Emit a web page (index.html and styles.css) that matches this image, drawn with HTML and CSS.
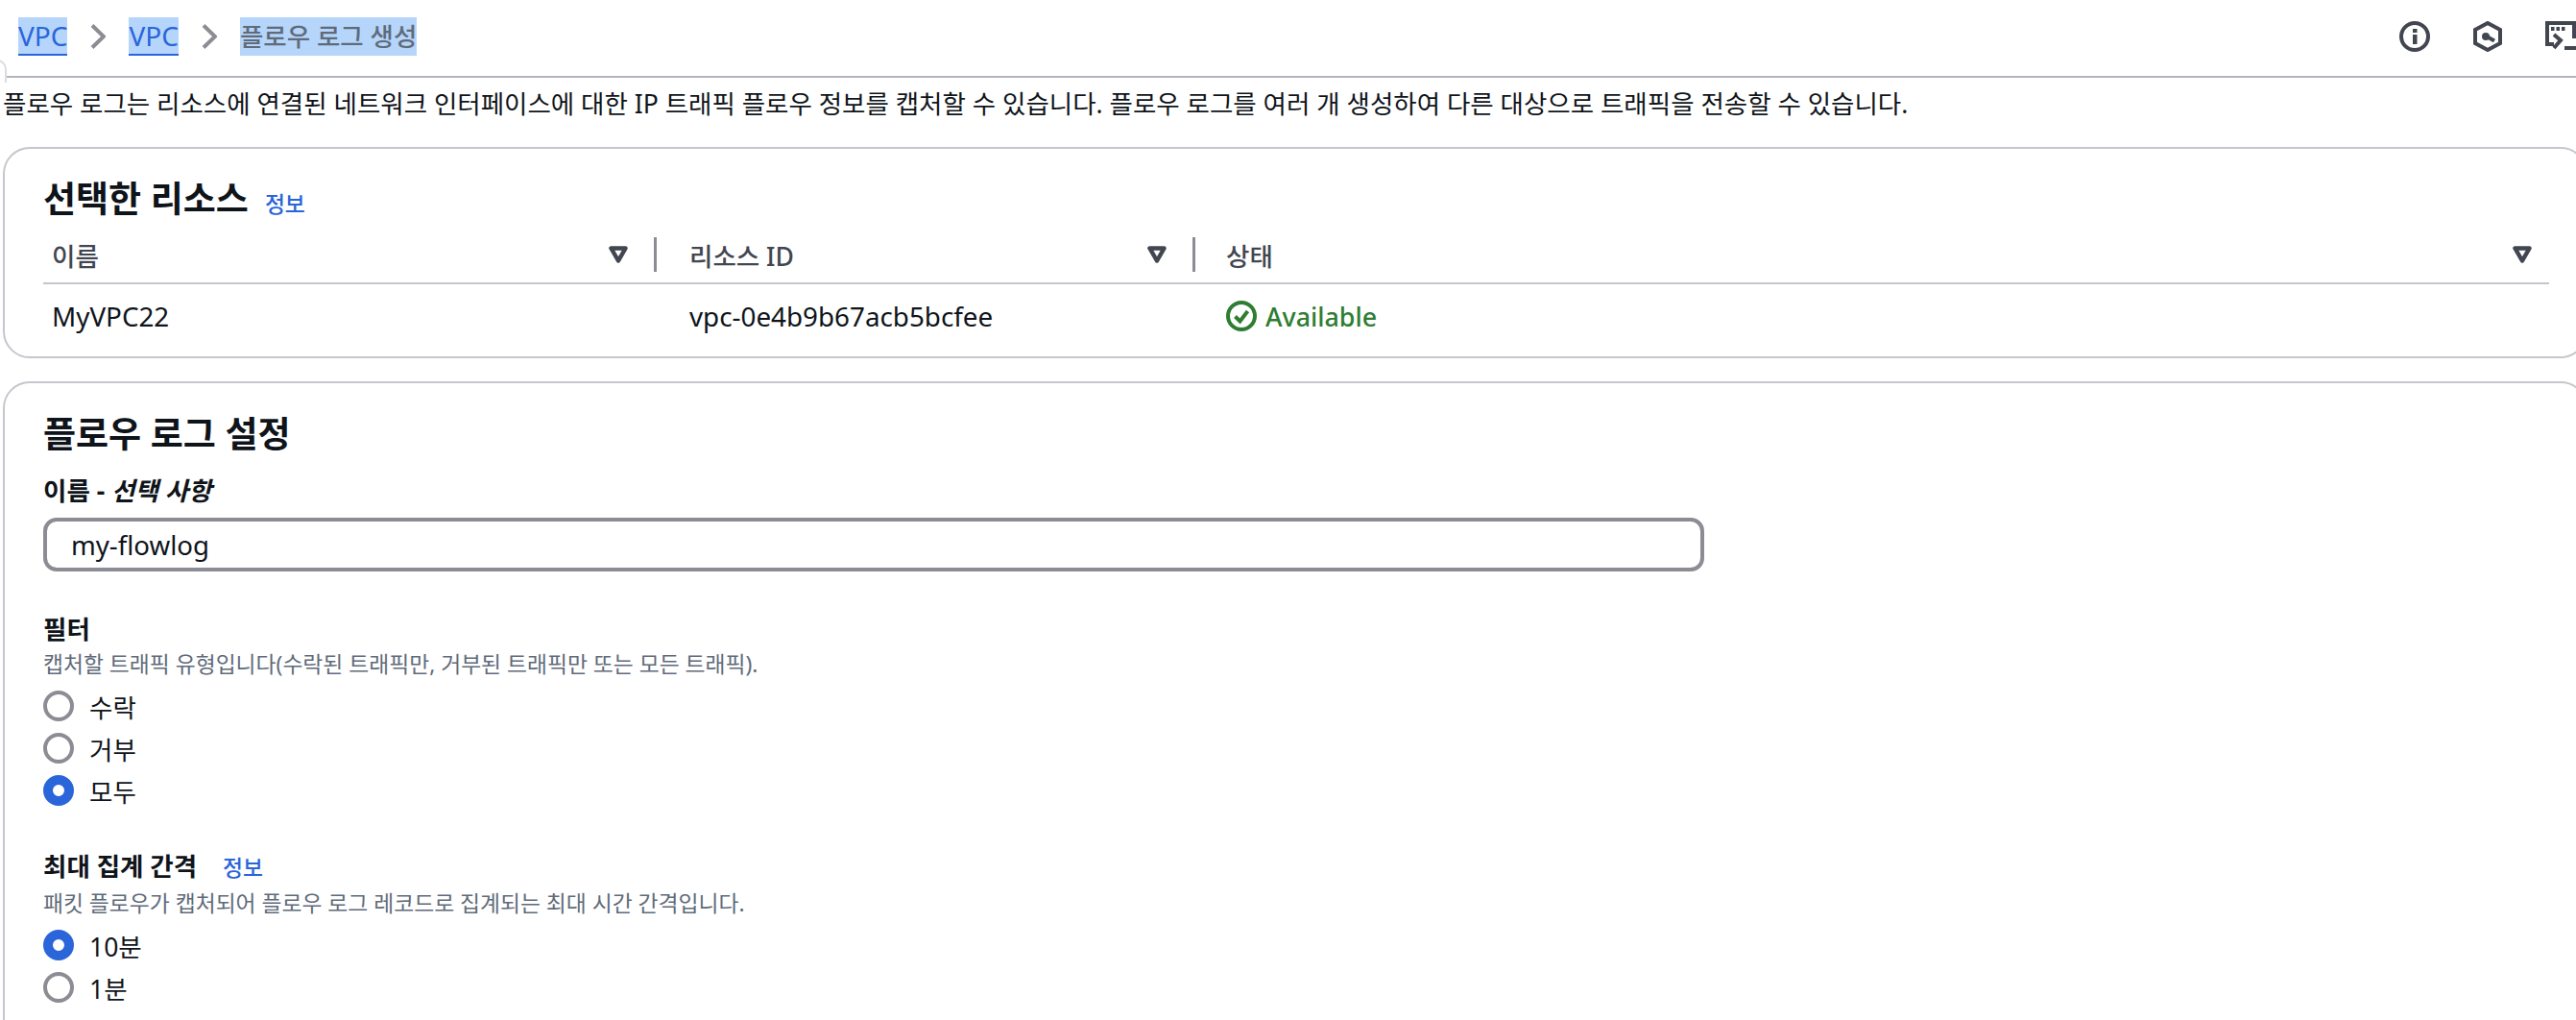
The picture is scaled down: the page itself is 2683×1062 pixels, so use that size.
FILE: index.html
```html
<!DOCTYPE html>
<html lang="ko">

<head>
    <meta charset="UTF-8">
    <title>플로우 로그 생성</title>
    <link rel="stylesheet" href="styles.css">
</head>

<body>
    <!-- Top bar -->
    <header class="topbar">
        <nav class="crumbs">
            <a class="crumb-link" href="#">VPC</a>
            <svg class="chevron" viewBox="0 0 16 26"><path d="M2 1.500 14 13 2 24.500"/></svg>
            <a class="crumb-link" href="#">VPC</a>
            <svg class="chevron" viewBox="0 0 16 26"><path d="M2 1.500 14 13 2 24.500"/></svg>
            <span class="crumb-current">플로우 로그 생성</span>
        </nav>
        <div class="tools">
            <svg class="tool" viewBox="0 0 32 32">
                <circle class="line" cx="16" cy="16" r="14"/>
                <rect class="fill" x="14" y="8" width="4.500" height="4"/>
                <rect class="fill" x="14" y="14" width="4.500" height="10"/>
            </svg>
            <svg class="tool" viewBox="0 0 32 32">
                <path class="line" d="M16 2 29 9V23L16 30 3 23V9Z"/>
                <circle class="fill" cx="14" cy="16" r="4"/>
                <path class="line" d="M15 16 23 20.500"/>
            </svg>
            <svg class="tool" viewBox="0 0 32 32">
                <path class="line" d="M9 24H2V2H30V18"/>
                <rect class="fill" x="6" y="6" width="3.500" height="4"/>
                <rect class="fill" x="11.500" y="6" width="3.500" height="4"/>
                <rect class="fill" x="17" y="6" width="3.500" height="4"/>
                <path class="line" d="M9 14 16 20 9 28"/>
                <rect class="fill" x="20" y="26" width="12" height="4"/>
            </svg>
        </div>
    </header>

    <p class="intro">플로우 로그는 리소스에 연결된 네트워크 인터페이스에 대한 IP 트래픽 플로우 정보를 캡처할 수 있습니다. 플로우 로그를 여러 개 생성하여 다른 대상으로 트래픽을 전송할 수 있습니다.</p>

    <!-- Selected resources -->
    <section class="card card-resources">
        <div class="card-title">
            <h2>선택한 리소스</h2>
            <a class="info" href="#">정보</a>
        </div>
        <div class="table">
            <div class="th col-first">
                <span class="th-name">이름</span>
                <svg class="sort" viewBox="0 0 20 18"><path d="M2.500 2.500H17.500L10 15.500Z"/></svg>
                <span class="sep"></span>
            </div>
            <div class="th">
                <span class="th-name">리소스 ID</span>
                <svg class="sort" viewBox="0 0 20 18"><path d="M2.500 2.500H17.500L10 15.500Z"/></svg>
                <span class="sep"></span>
            </div>
            <div class="th col-last">
                <span class="th-name">상태</span>
                <svg class="sort" viewBox="0 0 20 18"><path d="M2.500 2.500H17.500L10 15.500Z"/></svg>
            </div>
            <div class="td col-first">MyVPC22</div>
            <div class="td">vpc-0e4b9b67acb5bcfee</div>
            <div class="td col-last status">
                <svg class="status-icon" viewBox="0 0 32 32">
                    <circle cx="16" cy="16" r="14"/>
                    <path d="M9.500 16.500 14.500 21.500 22.500 11"/>
                </svg>
                Available
            </div>
        </div>
    </section>

    <!-- Flow log settings -->
    <section class="card card-settings">
        <h2 class="settings-title">플로우 로그 설정</h2>

        <label class="field-label" for="flow-name">이름 - <i>선택 사항</i></label>
        <input class="text-input" id="flow-name" type="text" value="my-flowlog">

        <div class="field field-filter">
            <div class="field-label">필터</div>
            <div class="hint">캡처할 트래픽 유형입니다(수락된 트래픽만, 거부된 트래픽만 또는 모든 트래픽).</div>
            <label class="radio"><input type="radio" name="filter">수락</label>
            <label class="radio"><input type="radio" name="filter">거부</label>
            <label class="radio"><input type="radio" name="filter" checked>모두</label>
        </div>

        <div class="field field-interval">
            <div class="field-label">최대 집계 간격 <a class="info info-label" href="#">정보</a></div>
            <div class="hint">패킷 플로우가 캡처되어 플로우 로그 레코드로 집계되는 최대 시간 간격입니다.</div>
            <label class="radio"><input type="radio" name="interval" checked>10분</label>
            <label class="radio"><input type="radio" name="interval">1분</label>
        </div>
    </section>
</body>
</html>
```

FILE: styles.css
```css
html, body {
    margin: 0;
    height: 1062px;
    overflow: hidden;
    background-color: #ffffff;
}

body {
    font-family: "Noto Sans", "Noto Sans CJK KR", sans-serif;
    font-size: 26.5px;
    color: #0f141a;
}

a {
    color: #2a65d9;
}

/* top bar */
.topbar {
    box-sizing: border-box;
    height: 81px;
    margin-left: 5px;
    padding: 18px 0 0 14px;
    border-bottom: 2px solid #b4b4bb;
    display: flex;
    justify-content: space-between;
}

/* corner of the container behind the bar */
.topbar::before {
    content: "";
    position: absolute;
    left: -20px;
    top: 62px;
    width: 23px;
    height: 22px;
    border: 2px solid #dcdce0;
    border-bottom: none;
    border-radius: 10px 10px 0 0;
}

.crumbs {
    display: flex;
    align-items: flex-start;
    height: 40px;
    line-height: 40px;
}

.crumb-link {
    height: 38px;
    font-size: 28px;
    line-height: 38px;
    background-color: #b5d5fb;
    border-bottom: 2px solid #2a65d9;
    text-decoration: none;
}

.crumb-current {
    background-color: #b5d5fb;
    color: #5f6b7a;
    font-weight: 500;
    height: 40px;
}

.chevron {
    width: 16px;
    height: 26px;
    margin: 7px 24px 0;
    fill: none;
    stroke: #8c8c94;
    stroke-width: 4;
}

.tools {
    display: flex;
    gap: 44px;
    padding-top: 4px;
}

.tool {
    width: 32px;
    height: 32px;
}

.tool .line {
    fill: none;
    stroke: #424650;
    stroke-width: 4;
}

.tool .fill {
    fill: #424650;
}

.intro {
    margin: 0;
    padding-left: 3px;
    height: 72px;
    line-height: 54px;
    white-space: nowrap;
}

/* cards */
.card {
    box-sizing: border-box;
    width: 2692px;
    margin-left: 3px;
    border: 2px solid #c6c6cd;
    border-radius: 28px;
    padding: 0 0 0 40px;
}

.card-resources {
    height: 220px;
    margin-bottom: 24px;
}

.card-settings {
    height: 700px;
}

.card-title {
    display: flex;
    align-items: baseline;
    gap: 17px;
    height: 81px;
    padding-top: 29px;
    box-sizing: border-box;
}

h2 {
    margin: 0;
    font-size: 37px;
    font-weight: 700;
    line-height: 46px;
}

.info {
    font-size: 22.8px;
    text-decoration: none;
    font-weight: 500;
}

.table {
    width: 2610px;
    display: grid;
    grid-template-columns: 639px 561px 1fr;
}

.th {
    height: 60px;
    display: flex;
    align-items: center;
    padding: 0 0 0 34px;
    border-bottom: 2px solid #c6c6cd;
    color: #424650;
    font-weight: 500;
    box-sizing: border-box;
}

.col-first {
    padding-left: 9px;
}

.col-last {
    padding-left: 32px;
    padding-right: 18px;
}

.th-name {
    flex: 1;
}

.sort {
    width: 20px;
    height: 18px;
    fill: none;
    stroke: #424650;
    stroke-width: 4.500;
    stroke-linejoin: round;
}

.sep {
    width: 3px;
    height: 36px;
    margin: 0 0 0 27px;
    background-color: #8c8c94;
}

.td {
    height: 66px;
    display: flex;
    align-items: center;
    padding-left: 34px;
    font-size: 27.8px;
}

.td.col-first {
    padding-left: 9px;
}

.td.col-last {
    padding-left: 32px;
}

.status {
    gap: 9px;
    color: #2e7d32;
    font-size: 26.8px;
    font-weight: 500;
}

.status-icon {
    width: 32px;
    height: 32px;
    fill: none;
    stroke: #2e7d32;
    stroke-width: 4;
}

/* settings */
.settings-title {
    padding-top: 30px;
}

.field-label {
    display: block;
    font-weight: 700;
    line-height: 36px;
}

.settings-title + .field-label {
    margin-top: 18px;
}

.text-input {
    display: block;
    box-sizing: border-box;
    width: 1730px;
    height: 56px;
    margin-top: 10px;
    padding: 0 25px;
    border: 4px solid #8c8c94;
    border-radius: 14px;
    font: inherit;
    font-size: 27.6px;
    color: #0f141a;
    outline: none;
}

.field-filter {
    margin-top: 42px;
}

.field-interval {
    margin-top: 39px;
}

.hint {
    font-size: 22.8px;
    line-height: 38px;
    margin-bottom: 2px;
    color: #5f6b7a;
}

.radio {
    display: flex;
    align-items: center;
    gap: 16px;
    height: 44px;
}

.radio input {
    appearance: none;
    box-sizing: border-box;
    width: 32px;
    height: 32px;
    margin: 0;
    border: 4px solid #8c8c94;
    border-radius: 50%;
}

.radio input:checked {
    border: 10px solid #2a65d9;
}

.info-label {
    margin-left: 20px;
}
```
